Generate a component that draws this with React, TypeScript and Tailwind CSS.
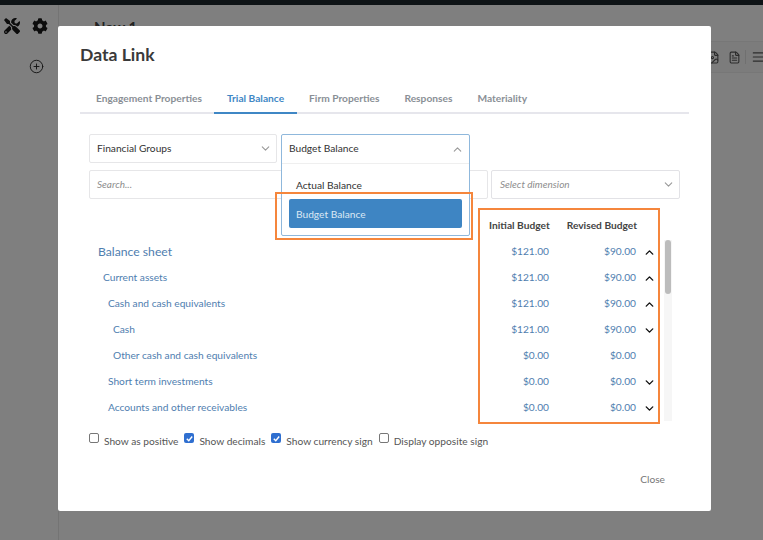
import React from "react";
import { ChevronDown, ChevronUp, CirclePlus, FileImage, FileText, Menu } from "lucide-react";
import { FaCog, FaTools } from "react-icons/fa";

type Row = {
  label: string;
  indent: string;
  size: string;
  initial: string;
  revised: string;
  arrow?: "up" | "down";
};

const rows: Row[] = [
  { label: "Balance sheet", indent: "pl-[9px]", size: "text-[12.2px]", initial: "$121.00", revised: "$90.00", arrow: "up" },
  { label: "Current assets", indent: "pl-[14px]", size: "text-[10.2px]", initial: "$121.00", revised: "$90.00", arrow: "up" },
  { label: "Cash and cash equivalents", indent: "pl-[19px]", size: "text-[10.2px]", initial: "$121.00", revised: "$90.00", arrow: "up" },
  { label: "Cash", indent: "pl-[24px]", size: "text-[10.2px]", initial: "$121.00", revised: "$90.00", arrow: "down" },
  { label: "Other cash and cash equivalents", indent: "pl-[24px]", size: "text-[10.2px]", initial: "$0.00", revised: "$0.00" },
  { label: "Short term investments", indent: "pl-[19px]", size: "text-[10.2px]", initial: "$0.00", revised: "$0.00", arrow: "down" },
  { label: "Accounts and other receivables", indent: "pl-[19px]", size: "text-[10.2px]", initial: "$0.00", revised: "$0.00", arrow: "down" },
];

const tabs = ["Engagement Properties", "Trial Balance", "Firm Properties", "Responses", "Materiality"];

const options = [
  { label: "Show as positive", checked: false },
  { label: "Show decimals", checked: true },
  { label: "Show currency sign", checked: true },
  { label: "Display opposite sign", checked: false },
];

const Check = ({ checked }: { checked: boolean }) =>
  checked ? (
    <span className="flex h-[10px] w-[10px] shrink-0 items-center justify-center rounded-[2px] bg-[#2f6fd0]">
      <svg viewBox="0 0 10 10" className="h-[9px] w-[9px]">
        <path d="M2 5.2 4.2 7.4 8 2.8" fill="none" stroke="#fff" strokeWidth="1.6" />
      </svg>
    </span>
  ) : (
    <span className="block h-[10px] w-[10px] shrink-0 rounded-[2px] border border-[#777] bg-white" />
  );

export default function App() {
  return (
    <div className="relative h-[540px] w-[763px] overflow-hidden bg-[#7f7f7f] font-['Lato','Noto_Sans',sans-serif]">
      <div className="h-[5px] bg-[#0e1316]" />
      <div className="flex h-[535px]">
        <aside className="flex w-[59px] shrink-0 flex-col border-r border-[#747474] pt-[13px]">
          <div className="flex items-center gap-[12px] pl-[4px] text-[#0c0c0c]">
            <FaTools size={16} />
            <FaCog size={16} />
          </div>
          <CirclePlus size={15} strokeWidth={1.5} className="ml-[29px] mt-[25px] text-[#141414]" />
        </aside>
        <main className="flex-1">
          <div className="h-[36px] pl-[35px] pt-[12px] text-[15px] font-bold leading-[20px] text-[#222]">New 1</div>
          <div className="flex h-[32px] items-center justify-end border-y border-[#777] bg-[#7c7c7c] text-[#2c2c2c]">
            <FileImage size={13} />
            <FileText size={13} className="ml-[8px]" />
            <span className="ml-[4px] h-[14px] w-px bg-[#707070]" />
            <Menu size={14} className="ml-[5px] mr-[-2px]" />
          </div>
        </main>
      </div>

      {/* modal */}
      <div className="absolute left-[58px] top-[26px] flex h-[485px] w-[653px] flex-col rounded-[2px] bg-white px-[22px]">
        <h1 className="pt-[16px] text-[17.6px] font-bold leading-[26px] text-[#3a3a3a]">Data Link</h1>
        <nav className="mt-[16px] flex h-[30px] border-b-2 border-[#e6e6ec] pl-[3.5px]">
          {tabs.map((tab) => (
            <div
              key={tab}
              className={
                tab === "Trial Balance"
                  ? "mb-[-2px] h-[30px] border-b-2 border-[#3f87c5] px-[12.5px] pt-[7px] text-[10.2px] font-bold leading-[14px] text-[#3f87c5]"
                  : "px-[12.5px] pt-[7px] text-[10.2px] font-bold leading-[14px] text-[#8a8f96]"
              }
            >
              {tab}
            </div>
          ))}
        </nav>

        <div className="relative ml-[9px] mt-[20px] w-[591px]">
          <div className="flex gap-[4px]">
            <div className="flex h-[29px] w-[188px] items-center justify-between rounded-[2px] border border-[#e6e6e8] pl-[7px] pr-[4px] text-[10.2px] text-[#333]">
              Financial Groups
              <ChevronDown size={13} className="text-[#999]" />
            </div>
          </div>
          <div className="mt-[7px] flex gap-[3px]">
            <div className="flex h-[29px] w-[399px] items-center rounded-[2px] border border-[#e6e6e8] pl-[7px] text-[10px] italic text-[#8d8d8d]">
              Search...
            </div>
            <div className="flex h-[29px] w-[189px] items-center justify-between rounded-[2px] border border-[#e2e2e6] pl-[8px] pr-[4px] text-[10px] italic text-[#8d8d8d]">
              Select dimension
              <ChevronDown size={13} className="text-[#999]" />
            </div>
          </div>

          {/* open select */}
          <div className="absolute left-[192px] top-0 h-[102px] w-[189px] rounded-[2px] border border-[#8fb8dc] bg-white">
            <div className="flex h-[29px] items-center justify-between border-b border-[#efefef] pl-[7px] pr-[5px] text-[10.2px] text-[#333]">
              Budget Balance
              <ChevronUp size={13} className="text-[#999]" />
            </div>
            <div className="px-[7px] pt-[14px] text-[10.2px] leading-[14px] text-[#333]">
              <div className="pl-[7px]">Actual Balance</div>
              <div className="mt-[7px] flex h-[29px] items-center rounded-[2px] bg-[#3e85c3] pl-[7px] text-[#dbe8f4]">
                Budget Balance
              </div>
            </div>
          </div>
        </div>

        <div className="relative ml-[9px] mt-[9px] w-[573px]">
          <div className="flex h-[25px] items-end justify-end pb-[1px] pr-[25px] text-[10.2px] font-bold leading-[14px] text-[#444]">
            <span>Initial Budget</span>
            <span className="ml-[17px]">Revised Budget</span>
          </div>
          <div className="mt-[6px] flex flex-col">
            {rows.map((row) => (
              <div key={row.label} className="flex h-[26px] items-center text-[#4f7eaf]">
                <span className={`flex-1 ${row.indent} ${row.size}`}>{row.label}</span>
                <span className="w-[70px] text-right text-[10.2px]">{row.initial}</span>
                <span className="w-[87px] text-right text-[10.2px]">{row.revised}</span>
                <span className="flex w-[26px] justify-center text-[#111]">
                  {row.arrow === "up" && <ChevronUp size={13} strokeWidth={2.6} />}
                  {row.arrow === "down" && <ChevronDown size={13} strokeWidth={2.6} />}
                </span>
              </div>
            ))}
          </div>
          {/* scrollbar */}
          <div className="absolute left-[575px] top-[32px] h-[181px] w-[8px] bg-[#f6f6f6]">
            <div className="ml-[1px] h-[54px] w-[6px] rounded-full bg-[#bcbcbc]" />
          </div>
        </div>

        <div className="ml-[9px] mt-[12px] flex gap-[6px]">
          {options.map((option) => (
            <label key={option.label} className="flex items-center gap-[5px] whitespace-nowrap text-[10.2px] leading-[14px] text-[#555]">
              <span className="mb-[5px]">
                <Check checked={option.checked} />
              </span>
              <span>{option.label}</span>
            </label>
          ))}
        </div>

        <div className="mt-[24px] pr-[24px] text-right text-[10.2px] text-[#777]">Close</div>
      </div>

      {/* callouts drawn on top of the screenshot */}
      <div className="absolute left-[275px] top-[192px] h-[48px] w-[198px] border-2 border-[#f5863c]" />
      <div className="absolute left-[478px] top-[208px] h-[216px] w-[182px] border-2 border-[#f5863c]" />
    </div>
  );
}
